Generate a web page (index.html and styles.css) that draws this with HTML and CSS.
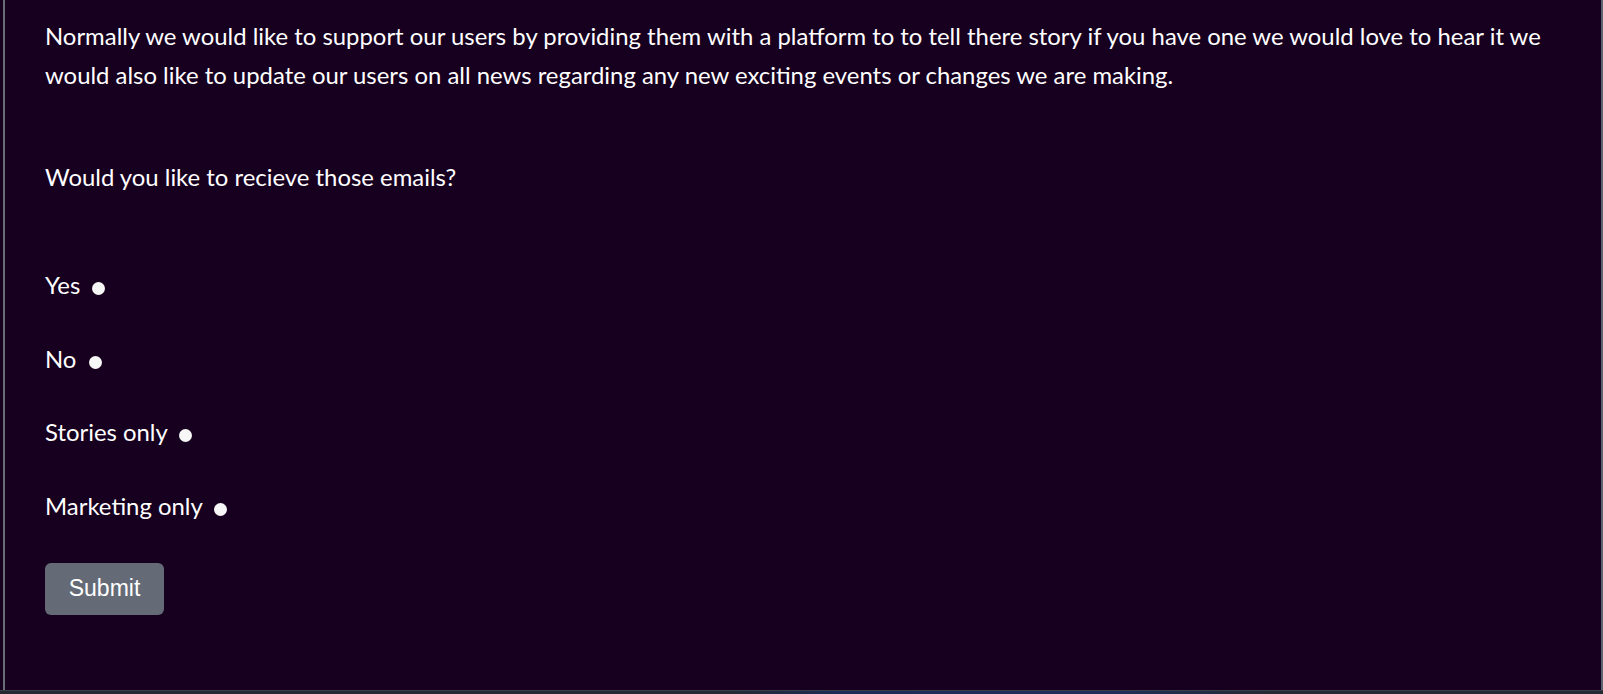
FILE: index.html
```html
<!DOCTYPE html>
<html lang="en">
<head>
<meta charset="utf-8">
<title>Newsletter</title>
<link rel="stylesheet" href="styles.css">
</head>
<body>
<div class="window">
  <main class="frame">
    <p class="intro">Normally we would like to support our users by providing them with a platform to to tell there story if you have one we would love to hear it we would also like to update our users on all news regarding any new exciting events or changes we are making.</p>
    <p class="question">Would you like to recieve those emails?</p>
    <form class="options">
      <label class="option">Yes <input type="radio" name="emails" class="dot"></label>
      <label class="option">No <input type="radio" name="emails" class="dot"></label>
      <label class="option">Stories only <input type="radio" name="emails" class="dot"></label>
      <label class="option">Marketing only <input type="radio" name="emails" class="dot"></label>
      <button type="button" class="submit">Submit</button>
    </form>
  </main>
  <div class="taskbar"></div>
</div>
</body>
</html>
```
FILE: styles.css
```css
html, body {
  margin: 0;
  padding: 0;
}
body {
  background: #17001f;
  color: #ffffff;
  font-family: Lato, "Open Sans", sans-serif;
  font-size: 23.9px;
  line-height: 37px;
}
.window {
  display: flex;
  flex-direction: column;
  height: 694px;
  overflow: hidden;
}
.frame {
  flex: 1;
  margin-left: 3px;
  border-left: 2px solid #6a6c78;
  border-right: 2px solid #5d6370;
  padding: 17px 40px 0 40px;
}
.intro {
  margin: 0;
  line-height: 38.5px;
}
.question {
  margin: 64px 0 0 0;
}
.options {
  display: flex;
  flex-direction: column;
  align-items: flex-start;
  margin-top: 71px;
}
.option {
  display: block;
  margin-bottom: 36.5px;
  white-space: nowrap;
}
.option:nth-of-type(4) {
  margin-bottom: 39px;
}
.dot {
  appearance: none;
  -webkit-appearance: none;
  width: 13px;
  height: 13px;
  margin: 0 0 0 6px;
  border: none;
  border-radius: 50%;
  background: #f7f7f7;
  vertical-align: -1px;
}
.submit {
  font-family: "Liberation Sans", Arial, sans-serif;
  font-size: 23px;
  line-height: 27px;
  color: #ffffff;
  background: #656b76;
  border: none;
  border-radius: 6px;
  padding: 12px 23px;
  width: 119px;
  height: 52px;
}
.taskbar {
  height: 4px;
  border-top: 1px solid #3a4048;
  box-sizing: border-box;
  background: linear-gradient(90deg, #232a31 0%, #232a31 45%, #1c2c55 52%, #1d2f58 70%, #232a31 80%, #232a31 100%);
}
```
